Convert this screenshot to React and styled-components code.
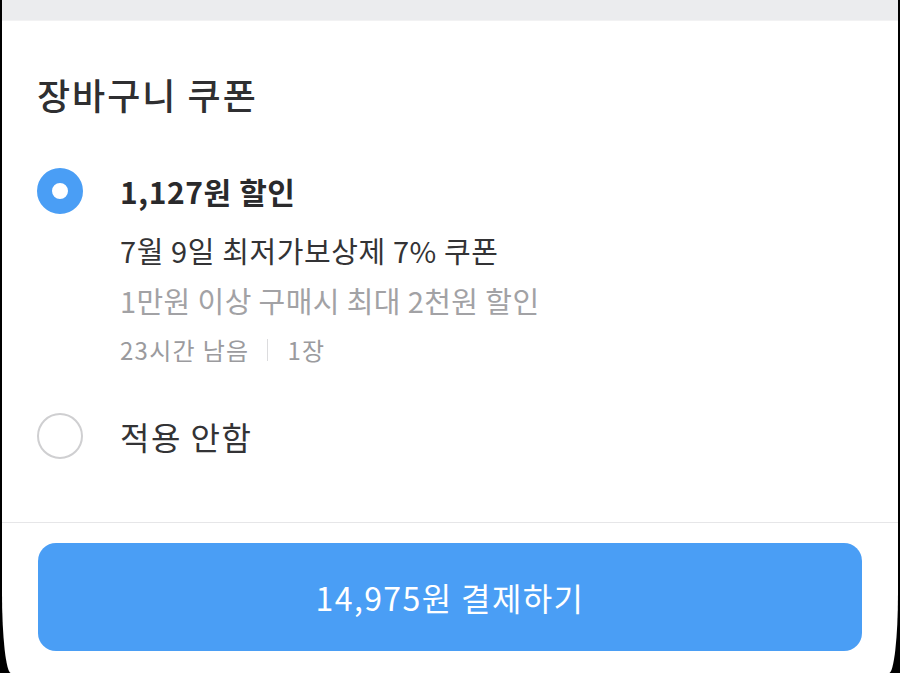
import styled, { createGlobalStyle } from 'styled-components';

const GlobalStyle = createGlobalStyle`
    html, body {
        margin: 0;
        padding: 0;
        background-color: #000000;
        overflow: hidden;
    }
    body {
        font-family: "Noto Sans CJK KR", "Noto Sans", sans-serif;
    }
`;

const coupons = [
    {
        id: 'c1',
        title: '1,127원 할인',
        name: '7월 9일 최저가보상제 7% 쿠폰',
        desc: '1만원 이상 구매시 최대 2천원 할인',
        remain: '23시간 남음',
        count: '1장',
        selected: true
    }
];

const App = () => {
    return (
        <>
            <GlobalStyle />
            <ScreenStyled>
                <TopBarStyled />
                <ContentStyled>
                    <H2Styled>장바구니 쿠폰</H2Styled>
                    <ListStyled>
                        {coupons.map((c) => (
                            <OptionStyled key={c.id}>
                                <RadioStyled $checked={c.selected} />
                                <InfoStyled>
                                    <TitleStyled $bold>{c.title}</TitleStyled>
                                    <NameStyled>{c.name}</NameStyled>
                                    <DescStyled>{c.desc}</DescStyled>
                                    <MetaStyled>
                                        {c.remain}
                                        <BarStyled />
                                        {c.count}
                                    </MetaStyled>
                                </InfoStyled>
                            </OptionStyled>
                        ))}
                        <OptionStyled>
                            <RadioStyled />
                            <InfoStyled>
                                <TitleStyled>적용 안함</TitleStyled>
                            </InfoStyled>
                        </OptionStyled>
                    </ListStyled>
                </ContentStyled>
                <FooterStyled>
                    <PayButtonStyled>14,975원 결제하기</PayButtonStyled>
                </FooterStyled>
            </ScreenStyled>
        </>
    );
};

export default App;

const ScreenStyled = styled.div`
    margin: 0 2px;
    height: 673px;
    background-color: #ffffff;
    border-radius: 0 0 9px 9px / 0 0 80px 80px;
    overflow: hidden;
`;
const TopBarStyled = styled.div`
    height: 20px;
    background-color: #ebecee;
    border-bottom: 1px solid #f2f2f3;
`;
const ContentStyled = styled.div`
    padding: 53px 35px 0;
`;
const H2Styled = styled.h2`
    margin: 0;
    font-size: 36px;
    line-height: 40px;
    font-weight: 500;
    color: #2f2f31;
    letter-spacing: 2px;
`;
const ListStyled = styled.div`
    display: flex;
    flex-direction: column;
    gap: 38px;
    margin-top: 54px;
    padding-bottom: 63px;
`;
const OptionStyled = styled.label`
    display: flex;
    align-items: flex-start;
    gap: 37px;
`;
const RadioStyled = styled.span`
    flex: none;
    width: 46px;
    height: 46px;
    box-sizing: border-box;
    border-radius: 50%;
    border: ${(p) => (p.$checked ? '15px solid #4a9ef5' : '2px solid #cfcfd1')};
    background-color: #ffffff;
`;
const InfoStyled = styled.div`
    display: flex;
    flex-direction: column;
`;
const TitleStyled = styled.div`
    font-size: ${(p) => (p.$bold ? '30px' : '32px')};
    line-height: 46px;
    font-weight: ${(p) => (p.$bold ? 700 : 400)};
    color: ${(p) => (p.$bold ? '#2a2a2c' : '#333335')};
    letter-spacing: ${(p) => (p.$bold ? '0.6px' : '1.5px')};
`;
const NameStyled = styled.div`
    margin-top: 11px;
    font-size: 29px;
    line-height: 50px;
    color: #333335;
    letter-spacing: 0.6px;
`;
const DescStyled = styled.div`
    font-size: 29px;
    line-height: 50px;
    color: #a2a2a5;
    letter-spacing: 0.4px;
`;
const MetaStyled = styled.div`
    display: flex;
    align-items: center;
    font-size: 24px;
    line-height: 50px;
    color: #9b9b9e;
    letter-spacing: 1.3px;
`;
const BarStyled = styled.span`
    width: 1px;
    height: 22px;
    margin: 0 19px 0 18px;
    background-color: #dcdcde;
`;
const FooterStyled = styled.div`
    border-top: 1px solid #e6e6e8;
    padding: 20px 36px;
`;
const PayButtonStyled = styled.button`
    display: block;
    width: 100%;
    height: 108px;
    border: none;
    border-radius: 18px;
    background-color: #4a9ef5;
    color: #ffffff;
    font-family: inherit;
    font-size: 32px;
    font-weight: 400;
    letter-spacing: 1.4px;
    cursor: pointer;
`;
